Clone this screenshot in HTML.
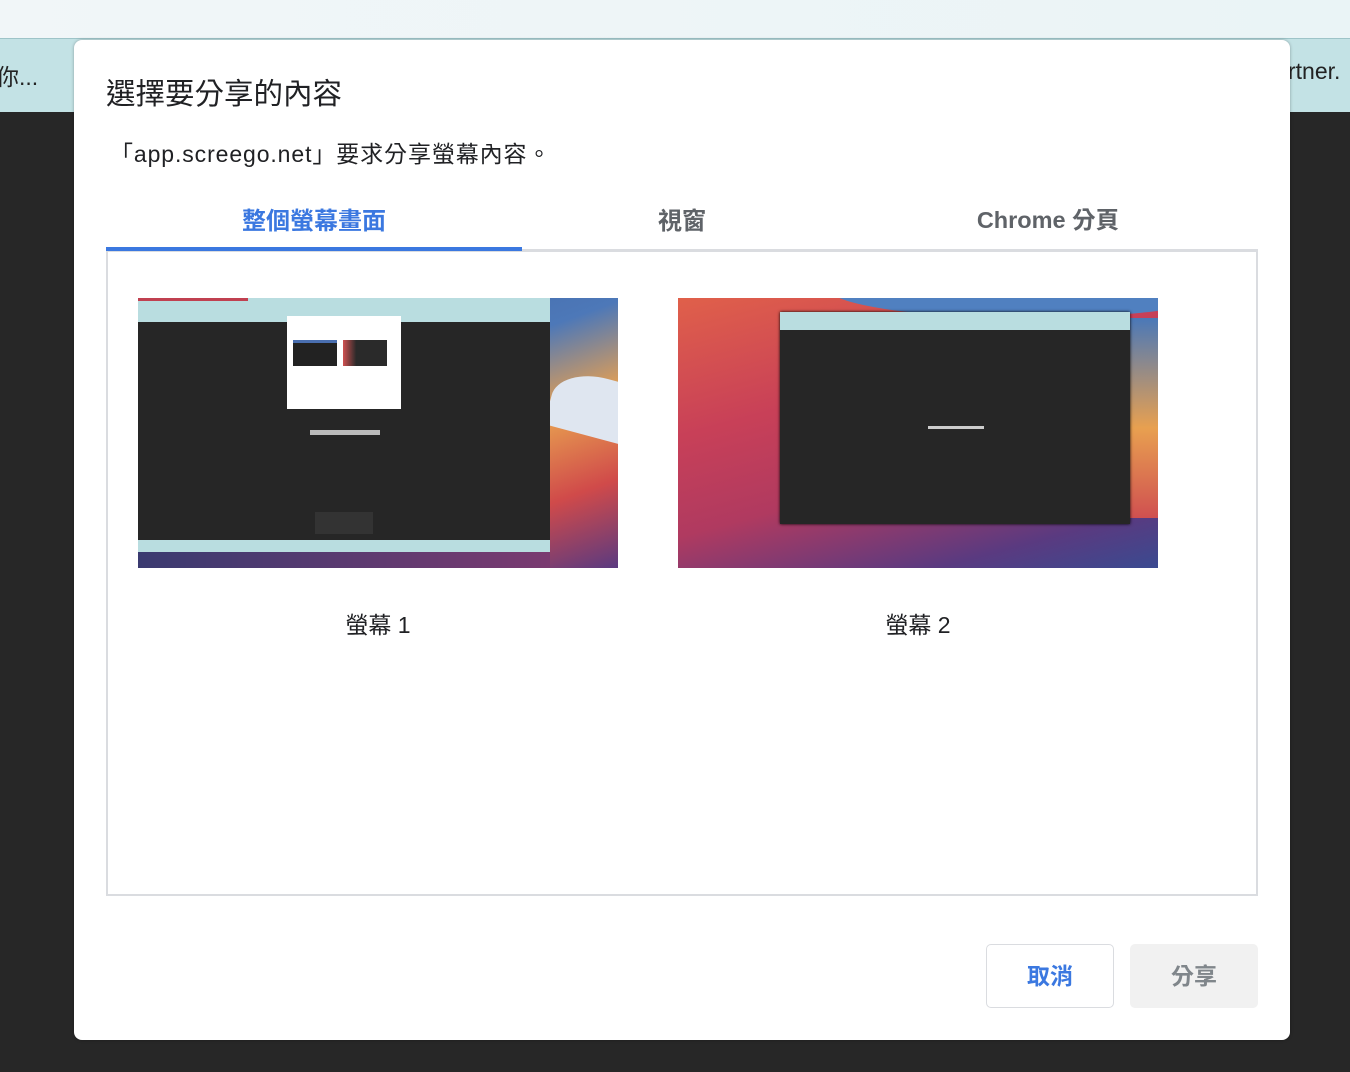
<!DOCTYPE html>
<html><head><meta charset="utf-8"><style>
*{margin:0;padding:0;box-sizing:border-box}
body{width:1350px;height:1072px;position:relative;overflow:hidden;background:#272727;font-family:"Liberation Sans","Noto Sans CJK TC",sans-serif}
.abs{position:absolute}
</style></head><body>
<div class="abs" style="left:0;top:0;width:1350px;height:38px;background:linear-gradient(90deg,#f1f6f8,#eaf4f6)"></div>
<div class="abs" style="left:0;top:38px;width:1350px;height:74px;background:#c3e2e5;border-top:1px solid #9ec4c8"></div>
<div class="abs" style="left:-4px;top:58px;font-size:23px;color:#222">你...</div>
<div class="abs" style="left:1288px;top:58px;font-size:23px;color:#222">rtner.</div>
<div class="abs" style="left:74px;top:40px;width:1216px;height:1000px;background:#fff;border-radius:8px;box-shadow:0 0 3px rgba(0,0,0,.3)"></div>
<div class="abs" style="left:106px;top:71px;font-size:29.5px;color:#202124">選擇要分享的內容</div>
<div class="abs" style="left:110px;top:135px;font-size:23px;letter-spacing:0.9px;color:#202124">「app.screego.net」要求分享螢幕內容。</div>
<div class="abs" style="left:106px;top:201px;width:416px;text-align:center;font-size:24px;color:#3b78e0;font-weight:bold">整個螢幕畫面</div>
<div class="abs" style="left:522px;top:201px;width:320px;text-align:center;font-size:24px;color:#5f6368;font-weight:bold">視窗</div>
<div class="abs" style="left:842px;top:201px;width:412px;text-align:center;font-size:23.5px;color:#5f6368;font-weight:bold">Chrome 分頁</div>
<div class="abs" style="left:106px;top:249px;width:1152px;height:3px;background:#dadce0"></div>
<div class="abs" style="left:106px;top:247px;width:416px;height:4px;background:#3b78e0"></div>
<div class="abs" style="left:106px;top:252px;width:1152px;height:644px;border:2px solid #dadce0;border-top:none"></div>
<!-- thumb 1 -->
<div class="abs" style="left:138px;top:298px;width:480px;height:270px;overflow:hidden;background:linear-gradient(160deg,#3a5fa0 0%,#4d78b8 40%,#e8a050 60%,#d04a4a 80%,#5a3a80 100%)">
 <div class="abs" style="left:412px;top:80px;width:100px;height:60px;border-radius:50% 0 0 0;background:#dfe6f0;transform:rotate(15deg)"></div>
 <div class="abs" style="left:0;top:0;width:412px;height:24px;background:#b9dde0"></div>
 <div class="abs" style="left:0;top:0;width:110px;height:3px;background:#c04050"></div>
 <div class="abs" style="left:0;top:24px;width:412px;height:218px;background:#262626"></div>
 <div class="abs" style="left:0;top:242px;width:412px;height:12px;background:#b9dde0"></div>
 <div class="abs" style="left:0;top:254px;width:412px;height:16px;background:linear-gradient(90deg,#3a3a70,#7a3a70)"></div>
 <div class="abs" style="left:149px;top:18px;width:114px;height:93px;background:#fff"></div>
 <div class="abs" style="left:155px;top:42px;width:44px;height:26px;background:#222;border-top:3px solid #4a6fb0"></div>
 <div class="abs" style="left:205px;top:42px;width:44px;height:26px;background:linear-gradient(90deg,#d05050,#2a2a2a 30%)"></div>
 <div class="abs" style="left:172px;top:132px;width:70px;height:5px;background:#bbb"></div>
 <div class="abs" style="left:177px;top:214px;width:58px;height:22px;background:#333"></div>
</div>
<!-- thumb 2 -->
<div class="abs" style="left:678px;top:298px;width:480px;height:270px;overflow:hidden;background:linear-gradient(165deg,#e0604a 0%,#c84058 35%,#b03a60 60%,#5a3a80 85%,#3a4a90 100%)">
 <div class="abs" style="left:150px;top:-40px;width:400px;height:60px;background:#5080c0;border-radius:50%"></div>
 <div class="abs" style="left:430px;top:20px;width:60px;height:200px;background:linear-gradient(180deg,#4a78b8,#e8a050 55%,#d05050)"></div>
 <div class="abs" style="left:102px;top:14px;width:350px;height:212px;background:#262626;box-shadow:0 0 3px #000"></div>
 <div class="abs" style="left:102px;top:14px;width:350px;height:18px;background:#b9dde0"></div>
 <div class="abs" style="left:250px;top:128px;width:56px;height:3px;background:#ccc"></div>
</div>
<div class="abs" style="left:138px;top:606px;width:480px;text-align:center;font-size:23px;color:#202124">螢幕 1</div>
<div class="abs" style="left:678px;top:606px;width:480px;text-align:center;font-size:23px;color:#202124">螢幕 2</div>
<div class="abs" style="left:986px;top:944px;width:128px;height:64px;border:1px solid #dadce0;border-radius:5px;text-align:center;line-height:62px;font-size:23px;font-weight:bold;color:#3b78e0">取消</div>
<div class="abs" style="left:1130px;top:944px;width:128px;height:64px;background:#f1f1f1;border-radius:5px;text-align:center;line-height:64px;font-size:23px;font-weight:bold;color:#80868b">分享</div>
</body></html>
